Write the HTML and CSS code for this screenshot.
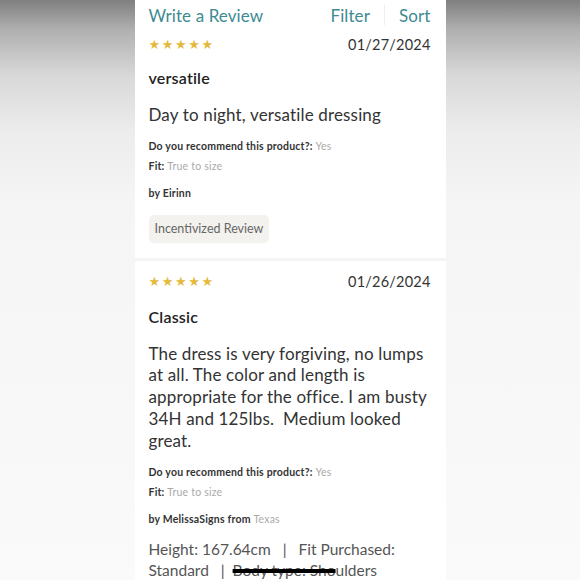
FILE: index.html
```html
<!DOCTYPE html>
<html>
<head>
<meta charset="utf-8">
<link rel="stylesheet" href="styles.css">
</head>
<body>
<div class="column">
  <div class="card first">
    <div class="header">
      <span class="link">Write a Review</span>
      <div class="actions">
        <span class="link">Filter</span>
        <span class="sep"></span>
        <span class="link">Sort</span>
      </div>
    </div>
    <div class="meta">
      <span class="stars">★★★★★</span>
      <span class="date">01/27/2024</span>
    </div>
    <div class="title">versatile</div>
    <div class="body">Day to night, versatile dressing</div>
    <div class="prop rec">Do you recommend this product?: <span class="val">Yes</span></div>
    <div class="prop fit">Fit: <span class="val">True to size</span></div>
    <div class="prop by">by Eirinn</div>
    <div class="tag">Incentivized Review</div>
  </div>
  <div class="card second">
    <div class="meta">
      <span class="stars">★★★★★</span>
      <span class="date">01/26/2024</span>
    </div>
    <div class="title">Classic</div>
    <div class="body">The dress is very forgiving, no lumps at all. The color and length is appropriate for the office. I am busty 34H and 125lbs.&nbsp; Medium looked great.</div>
    <div class="prop rec">Do you recommend this product?: <span class="val">Yes</span></div>
    <div class="prop fit">Fit: <span class="val">True to size</span></div>
    <div class="prop by">by MelissaSigns from <span class="val">Texas</span></div>
    <div class="details">Height: 167.64cm &nbsp; | &nbsp; Fit Purchased: Standard &nbsp; | &nbsp;<span class="scribble">Body type: Sho</span>ulders</div>
  </div>
</div>
</body>
</html>
```

FILE: styles.css
```css
html, body {
  margin: 0;
  padding: 0;
  height: 100%;
}
body {
  background: linear-gradient(to bottom, #7f7f7f 0px, #b0b0b0 30px, #d8d8d8 75px, #ececec 130px, #f5f5f5 200px, #fafafa 580px);
  font-family: Lato, "Open Sans", sans-serif;
  color: #333;
  overflow: hidden;
}
.column {
  width: 311px;
  margin: 0 auto;
  background: #f4f4f4;
  min-height: 580px;
  display: flex;
  flex-direction: column;
  gap: 3px;
}
.card {
  background: #fff;
  padding: 0 15px 0 14px;
  display: flex;
  flex-direction: column;
}
.card.first {
  padding-bottom: 15px;
}
.card.second {
  padding-top: 11px;
  flex: 1;
}
.header {
  display: flex;
  justify-content: space-between;
  align-items: center;
  height: 30px;
}
.link {
  color: #3d8a92;
  font-size: 17px;
  letter-spacing: 0.1px;
}
.actions {
  display: flex;
  align-items: center;
  gap: 14px;
}
.sep {
  width: 1px;
  height: 20px;
  background: #eeeeee;
}
.meta {
  display: flex;
  justify-content: space-between;
  align-items: center;
  height: 20px;
}
.first .meta {
  margin-top: 4px;
}
.stars {
  color: #e5b93b;
  font-size: 13px;
  letter-spacing: 1.6px;
  font-family: "DejaVu Sans", sans-serif;
}
.date {
  font-size: 14.5px;
  color: #333;
  letter-spacing: 0.2px;
}
.title {
  font-size: 16px;
  font-weight: 600;
  line-height: 20px;
  margin-top: 14px;
  color: #222;
  letter-spacing: 0.2px;
}
.second .title {
  margin-top: 15px;
}
.body {
  font-size: 17px;
  line-height: 21.7px;
  margin-top: 16px;
  color: #333;
  letter-spacing: 0.15px;
}
.prop {
  font-size: 10.5px;
  font-weight: 700;
  line-height: 14px;
  color: #333;
  letter-spacing: 0.2px;
}
.prop .val {
  font-weight: 400;
  color: #aaa;
}
.rec {
  margin-top: 13px;
}
.second .rec {
  margin-top: 14px;
}
.fit {
  margin-top: 6px;
}
.by {
  margin-top: 13px;
}
.tag {
  align-self: flex-start;
  margin-top: 15px;
  height: 28px;
  line-height: 28px;
  padding: 0 6px;
  background: #f3f2ee;
  border-radius: 5px;
  font-size: 12.5px;
  color: #666;
}
.details {
  margin-top: 13px;
  font-size: 15.5px;
  line-height: 20.5px;
  color: #555;
}
.scribble {
  text-decoration: line-through;
  text-decoration-color: #000;
  text-decoration-thickness: 4px;
}
```
